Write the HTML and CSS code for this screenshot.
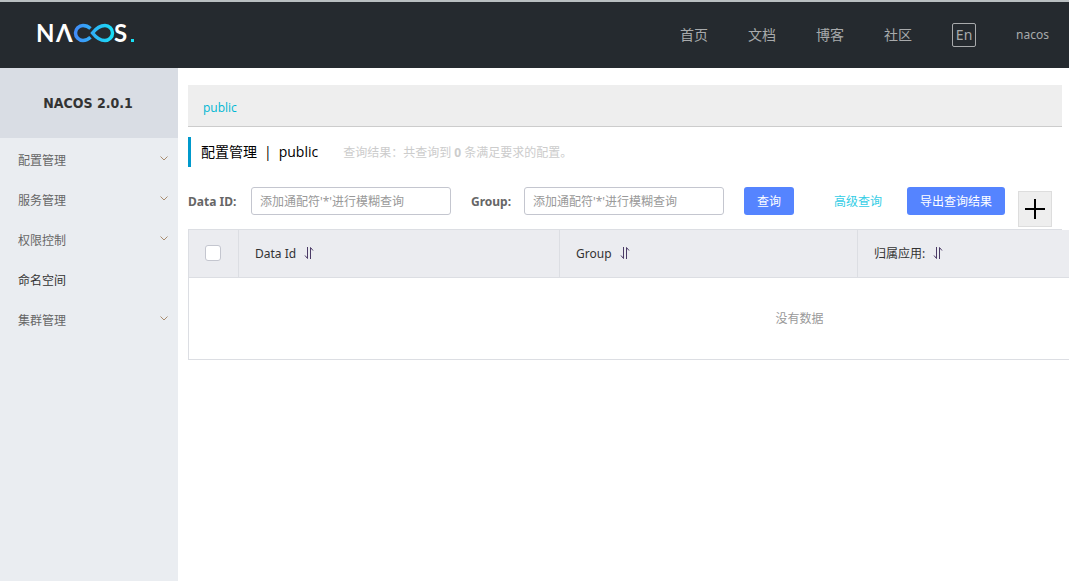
FILE: index.html
```html
<!DOCTYPE html>
<html lang="zh-CN">
<head>
<meta charset="utf-8">
<title>Nacos</title>
<link rel="stylesheet" href="styles.css">
</head>
<body>
<header class="topbar">
  <a class="logo" href="#" aria-label="Nacos">
    <svg width="100" height="34" viewBox="-2 -4 100 34">
      <defs>
        <linearGradient id="loop" gradientUnits="userSpaceOnUse" x1="36" y1="0" x2="76" y2="0">
          <stop offset="0" stop-color="#4389f8"/>
          <stop offset="1" stop-color="#18e0f5"/>
        </linearGradient>
      </defs>
      <text class="logo-text" x="-2" y="20">N</text>
      <text class="logo-text" x="18" y="20">Λ</text>
      <text class="logo-text" x="76" y="20">S</text>
      <path d="M52.500 6.500C50 4.200 47.600 3.500 45 3.500A7.500 7.500 0 0 0 45 18.500C48 18.500 50.500 17.200 52.500 15.300M54.500 11C58 6.500 61.500 3.500 67 3.500A7.500 7.500 0 0 1 67 18.500C61.500 18.500 58 15.500 54.500 11Z" fill="none" stroke="url(#loop)" stroke-width="3.500"/>
      <rect x="93" y="17" width="3" height="3" fill="#18e0f5"/>
    </svg>
  </a>
  <nav class="nav">
    <a href="#">首页</a>
    <a href="#">文档</a>
    <a href="#">博客</a>
    <a href="#">社区</a>
    <button class="lang" type="button">En</button>
    <a class="user" href="#">nacos</a>
  </nav>
</header>
<div class="layout">
  <aside class="sidebar">
    <h1 class="product">NACOS 2.0.1</h1>
    <nav class="menu">
      <a href="#">配置管理<svg class="chevron" viewBox="0 0 8 5"><path d="M.5.5 4 4 7.500.5"/></svg></a>
      <a href="#">服务管理<svg class="chevron" viewBox="0 0 8 5"><path d="M.5.5 4 4 7.500.5"/></svg></a>
      <a href="#">权限控制<svg class="chevron" viewBox="0 0 8 5"><path d="M.5.5 4 4 7.500.5"/></svg></a>
      <a class="leaf" href="#">命名空间</a>
      <a href="#">集群管理<svg class="chevron" viewBox="0 0 8 5"><path d="M.5.5 4 4 7.500.5"/></svg></a>
    </nav>
  </aside>
  <main class="content">
    <div class="namespaces"><a href="#">public</a></div>
    <div class="heading">
      <h2>配置管理<span class="bar">|</span>public</h2>
      <p>查询结果：共查询到 <strong>0</strong> 条满足要求的配置。</p>
    </div>
    <form class="query">
      <label class="label-id" for="data-id">Data ID:</label>
      <input id="data-id" class="field" type="text" placeholder="添加通配符'*'进行模糊查询">
      <label class="label-group" for="group">Group:</label>
      <input id="group" class="field" type="text" placeholder="添加通配符'*'进行模糊查询">
      <button class="primary" type="button">查询</button>
      <a class="advanced" href="#">高级查询</a>
      <button class="primary" type="button">导出查询结果</button>
      <button class="add" type="button" aria-label="+"><svg width="20" height="20" viewBox="0 0 20 20"><path d="M10 0v20M0 10h20"/></svg></button>
    </form>
    <div class="table-wrap">
      <table class="table">
        <colgroup><col class="col-check"><col class="col-id"><col class="col-group"><col></colgroup>
        <thead>
          <tr>
            <th class="check"><input type="checkbox" aria-labelledby="th-id"></th>
            <th id="th-id">Data Id<svg class="sort" viewBox="0 0 12 12"><path d="M4.500 0v11.500L2 8.500M7.500 12V.5L10 3.500"/></svg></th>
            <th>Group<svg class="sort" viewBox="0 0 12 12"><path d="M4.500 0v11.500L2 8.500M7.500 12V.5L10 3.500"/></svg></th>
            <th>归属应用:<svg class="sort" viewBox="0 0 12 12"><path d="M4.500 0v11.500L2 8.500M7.500 12V.5L10 3.500"/></svg></th>
          </tr>
        </thead>
        <tbody><tr><td colspan="4">没有数据</td></tr></tbody>
      </table>
    </div>
  </main>
</div>
</body>
</html>
```
FILE: styles.css
```css
* { box-sizing: border-box; }
body {
  margin: 0;
  min-height: 100vh;
  display: flex;
  flex-direction: column;
  font: 12px/18px "Noto Sans", "Noto Sans CJK SC", sans-serif;
  color: #333;
  background: #fff;
}
a { text-decoration: none; color: inherit; }
h1, h2, p { margin: 0; }
button, input { font: inherit; }

.topbar {
  display: flex;
  align-items: center;
  justify-content: space-between;
  height: 68px;
  padding: 0 20px 0 36px;
  background: #252a2f;
  border-top: 2px solid #b9bfc1;
}
.logo svg { display: block; }
.logo-text { font: 700 24px Lato, sans-serif; fill: #fff; }
.nav {
  display: flex;
  align-items: center;
  gap: 40px;
  font-size: 14px;
  color: #a8aaac;
}
.lang {
  width: 24px;
  height: 24px;
  padding: 0;
  border: 1px solid #a8aaac;
  border-radius: 2px;
  background: none;
  color: inherit;
  line-height: 20px;
}
.user { font-size: 12px; }

.layout { flex: 1; display: flex; }
.sidebar { flex: 0 0 178px; background: #eaedf1; }
.product {
  height: 70px;
  padding-right: 2px;
  background: #d9dde4;
  font-family: "DejaVu Sans Condensed", "DejaVu Sans", sans-serif;
  font-size: 14px;
  line-height: 70px;
  text-align: center;
}
.menu { padding-top: 3px; color: #666; }
.menu a {
  display: flex;
  align-items: center;
  justify-content: space-between;
  height: 40px;
  padding: 0 10px 0 18px;
}
.menu .leaf { color: #333; }
.chevron { width: 8px; height: 5px; margin-bottom: 6px; }
.chevron path { fill: none; stroke: #a98d70; }

.content { flex: 1; min-width: 0; padding: 17px 7px 0 10px; overflow: hidden; }
.namespaces {
  height: 42px;
  padding: 14px 15px 0;
  background: #eee;
  border-bottom: 1px solid #ccc;
  font-family: "Open Sans", sans-serif;
  color: #00b7d3;
}
.heading {
  display: flex;
  align-items: center;
  gap: 25px;
  height: 30px;
  margin: 10px 0 20px;
  padding-left: 10px;
  border-left: 3px solid #09c;
}
.heading h2 {
  font-family: "Open Sans", "Noto Sans CJK SC", sans-serif;
  font-size: 14px;
  font-weight: 400;
  color: #000;
}
.heading p { padding-top: 2px; color: #ccc; }
.bar { margin: 0 7px; }

.query { display: flex; align-items: flex-start; height: 42px; white-space: nowrap; }
.query label { font-weight: 700; line-height: 30px; color: #666; }
.label-id { flex: 0 0 63px; }
.label-group { flex: 0 0 53px; }
.field {
  width: 200px;
  height: 28px;
  margin-right: 20px;
  padding: 1px 8px 0;
  border: 1px solid #c4c6cf;
  border-radius: 3px;
  color: #333;
}
.field::placeholder { color: #999; }
.primary {
  height: 28px;
  padding: 2px 13px 0;
  border: 0;
  border-radius: 3px;
  background: #5584ff;
  color: #fff;
}
.advanced { margin: 0 25px 0 40px; line-height: 30px; color: #33cde5; }
.add {
  display: grid;
  place-items: center;
  width: 34px;
  height: 36px;
  margin: 4px 0 0 13px;
  padding: 0;
  border: 1px solid #ddd;
  background: #eee;
}
.add path { stroke: #000; stroke-width: 2; }

.table-wrap { border-top: 1px solid #dcdee3; }
.table {
  width: 1223px;
  table-layout: fixed;
  border-spacing: 0;
  border: 1px solid #dcdee3;
  border-top: 0;
}
.col-check { width: 50px; }
.col-id { width: 321px; }
.col-group { width: 298px; }
.table th {
  height: 48px;
  padding: 0 16px;
  background: #ebecf0;
  border-right: 1px solid #dcdee3;
  border-bottom: 1px solid #dcdee3;
  font-weight: 400;
  text-align: left;
}
.table .check { padding: 0 1px 2px 0; text-align: center; }
.check input {
  appearance: none;
  width: 16px;
  height: 16px;
  margin: 0;
  border: 1px solid #c4c6cf;
  border-radius: 3px;
  background: #fff;
  vertical-align: middle;
}
.sort { width: 12px; height: 12px; margin-left: 7px; vertical-align: -1px; }
.sort path { fill: none; stroke: #4b3b66; }
.table td { height: 81px; padding: 0; text-align: center; color: #999; }
```
